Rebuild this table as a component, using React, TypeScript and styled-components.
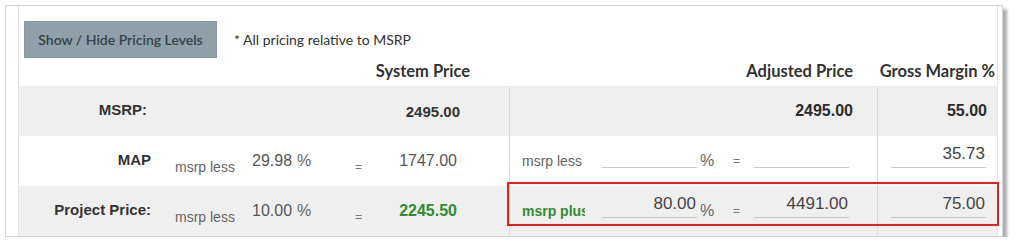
import React from 'react'
import styled, { createGlobalStyle } from 'styled-components'

const GlobalStyle = createGlobalStyle`
  body {
    margin: 0;
    background: #ffffff;
    font-family: 'Liberation Sans', Arial, sans-serif;
  }
`

const Frame = styled.div`
  display: flex;
  box-sizing: border-box;
  width: 998px;
  height: 232px;
  margin: 5px 0 0 5px;
  border: 1px solid #d4d4d4;
  background: #ffffff;
  box-shadow: 4px 4px 3px rgba(0, 0, 0, 0.32);
`

const Gutter = styled.div<{ w: number }>`
  flex: 0 0 ${({ w }) => w}px;
`

const Panel = styled.div`
  display: flex;
  flex-direction: column;
  width: 980px;
  box-sizing: border-box;
  border-left: 1px solid #e2e2e2;
  border-right: 1px solid #e6e6e6;
`

const Toolbar = styled.div`
  display: flex;
  align-items: center;
  gap: 17px;
  padding: 15px 0 0 5px;
`

const ToggleButton = styled.button`
  width: 193px;
  height: 37px;
  border: 1px solid #8597a0;
  background: #8fa0a9;
  color: #35424a;
  font-family: Lato, 'Liberation Sans', sans-serif;
  font-size: 14px;
  font-weight: 600;
  cursor: pointer;
`

const Note = styled.span`
  font-family: Lato, 'Liberation Sans', sans-serif;
  font-size: 14px;
  color: #333333;
`

const columns = '146px 344px 368px 120px'

const HeaderRow = styled.div`
  display: grid;
  grid-template-columns: ${columns};
  height: 28px;
  align-items: center;
`

const HeaderCell = styled.div<{ pr: number }>`
  text-align: right;
  padding: 0 ${({ pr }) => pr}px 3px 0;
  font-family: Lato, 'Liberation Sans', sans-serif;
  font-size: 16.5px;
  font-weight: 700;
  color: #333333;
  white-space: nowrap;
`

const Row = styled.div<{ shaded?: boolean }>`
  position: relative;
  display: grid;
  grid-template-columns: ${columns};
  height: 50px;
  background: ${({ shaded }) => (shaded ? '#efefef' : '#ffffff')};
`

const LabelCell = styled.div<{ pr: number }>`
  display: flex;
  align-items: center;
  justify-content: flex-end;
  padding: 0 ${({ pr }) => pr}px 3px 0;
  font-size: 15px;
  font-weight: 700;
  color: #333333;
  white-space: nowrap;
`

const SystemCell = styled.div`
  display: grid;
  grid-template-columns: 10px 77px 45px 20px 38px 10px 92px;
  align-items: center;
`

const SystemTotal = styled.div`
  display: flex;
  align-items: center;
  justify-content: flex-end;
  padding-right: 49px;
  font-size: 15px;
  font-weight: 700;
  color: #333333;
`

const Divided = styled.div`
  border-left: 1px solid #dcdcdc;
`

const AdjustedCell = styled(Divided)`
  display: grid;
  grid-template-columns: 80px 95px 26px 31px 95px;
  align-items: center;
  padding-left: 12px;
`

const MarginCell = styled(Divided)`
  display: flex;
  align-items: center;
  padding-left: 13px;
`

const TotalCell = styled(Divided)<{ pr: number }>`
  display: flex;
  align-items: center;
  justify-content: flex-end;
  padding-right: ${({ pr }) => pr}px;
  font-size: 16px;
  font-weight: 700;
  color: #2b2b2b;
`

const Muted = styled.span<{ low?: boolean }>`
  margin-top: ${({ low }) => (low ? 12 : 0)}px;
  font-size: 14px;
  color: #666666;
  white-space: nowrap;
`

const Equals = styled.span<{ low?: boolean; inset?: number }>`
  margin-top: ${({ low }) => (low ? 12 : 0)}px;
  padding-left: ${({ inset = 0 }) => inset}px;
  font-size: 12px;
  color: #777777;
`

const Percent = styled.span<{ inset?: number }>`
  padding-left: ${({ inset = 0 }) => inset}px;
  font-size: 16px;
  color: #666666;
`

const Figure = styled.span<{ align?: 'left' | 'right'; tone?: 'green' }>`
  text-align: ${({ align = 'left' }) => align};
  font-size: 16px;
  font-weight: ${({ tone }) => (tone ? 700 : 400)};
  color: ${({ tone }) => (tone ? '#2e8b30' : '#555555')};
  white-space: nowrap;
`

const ClippedLabel = styled.span`
  width: 63px;
  overflow: hidden;
  font-size: 14px;
  font-weight: 700;
  color: #2e8b30;
  white-space: nowrap;
`

const Field = styled.input`
  box-sizing: border-box;
  width: 95px;
  height: 23px;
  margin-bottom: 9px;
  padding: 0 1px 4px 0;
  border: none;
  border-bottom: 1px solid #c9c9c9;
  background: transparent;
  outline: none;
  text-align: right;
  font-family: 'Liberation Sans', Arial, sans-serif;
  font-size: 17px;
  color: #444444;
`

const Highlight = styled.div`
  position: absolute;
  top: -4px;
  left: 488px;
  width: 492px;
  height: 44px;
  box-sizing: border-box;
  border: 2px solid #e5211f;
  pointer-events: none;
`

type Level = {
  label: string
  basis: string
  pct: string
  price: string
  green?: boolean
  shaded?: boolean
  adjBasis: string
  adjPct: string
  adjPrice: string
  margin: string
  highlighted?: boolean
}

const levels: Level[] = [
  {
    label: 'MAP',
    basis: 'msrp less',
    pct: '29.98',
    price: '1747.00',
    adjBasis: 'msrp less',
    adjPct: '',
    adjPrice: '',
    margin: '35.73',
  },
  {
    label: 'Project Price:',
    basis: 'msrp less',
    pct: '10.00',
    price: '2245.50',
    green: true,
    shaded: true,
    adjBasis: 'msrp plus',
    adjPct: '80.00',
    adjPrice: '4491.00',
    margin: '75.00',
    highlighted: true,
  },
]

const LevelRow = ({ level }: { level: Level }) => (
  <Row shaded={level.shaded}>
    <LabelCell pr={14}>{level.label}</LabelCell>
    <SystemCell>
      <span />
      <Muted low>{level.basis}</Muted>
      <Figure>{level.pct}</Figure>
      <Percent>%</Percent>
      <span />
      <Equals low>=</Equals>
      <Figure align="right" tone={level.green ? 'green' : undefined}>
        {level.price}
      </Figure>
    </SystemCell>
    <AdjustedCell>
      {level.highlighted ? (
        <ClippedLabel>{level.adjBasis}</ClippedLabel>
      ) : (
        <Muted>{level.adjBasis}</Muted>
      )}
      <Field readOnly defaultValue={level.adjPct} />
      <Percent inset={3}>%</Percent>
      <Equals inset={10}>=</Equals>
      <Field readOnly defaultValue={level.adjPrice} />
    </AdjustedCell>
    <MarginCell>
      <Field readOnly defaultValue={level.margin} />
    </MarginCell>
    {level.highlighted && <Highlight />}
  </Row>
)

const App = () => (
  <>
    <GlobalStyle />
    <Frame>
      <Gutter w={12} />
      <Panel>
        <Toolbar>
          <ToggleButton>Show / Hide Pricing Levels</ToggleButton>
          <Note>* All pricing relative to MSRP</Note>
        </Toolbar>
        <HeaderRow>
          <span />
          <HeaderCell pr={39}>System Price</HeaderCell>
          <HeaderCell pr={24}>Adjusted Price</HeaderCell>
          <HeaderCell pr={2}>Gross Margin %</HeaderCell>
        </HeaderRow>
        <Row shaded>
          <LabelCell pr={18}>MSRP:</LabelCell>
          <SystemTotal>2495.00</SystemTotal>
          <TotalCell pr={24}>2495.00</TotalCell>
          <TotalCell pr={10}>55.00</TotalCell>
        </Row>
        {levels.map((level) => (
          <LevelRow key={level.label} level={level} />
        ))}
      </Panel>
      <Gutter w={4} />
    </Frame>
  </>
)

export default App
